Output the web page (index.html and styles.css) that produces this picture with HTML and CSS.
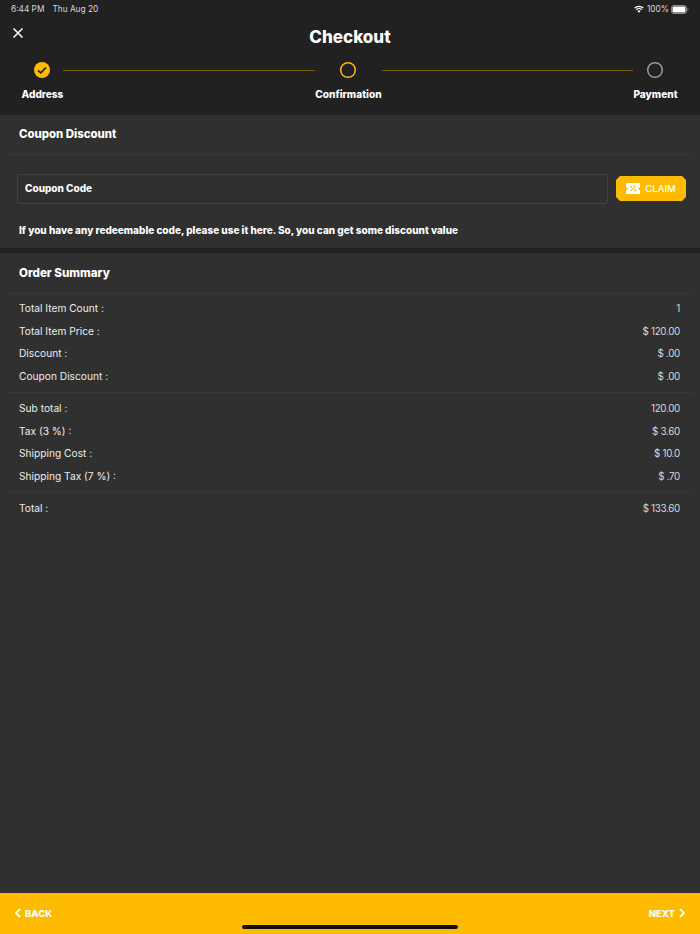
FILE: index.html
```html
<!DOCTYPE html>
<html lang="en">
<head>
<meta charset="utf-8">
<title>Checkout</title>
<link rel="stylesheet" href="styles.css">
</head>
<body>
<div class="page">
  <header class="header">
    <div class="status">
      <span class="status-time"><span class="clock">6:44 PM</span><span>Thu Aug 20</span></span>
      <span class="status-right">
        <svg class="wifi" width="10" height="8" viewBox="0 0 11 9"><path d="M5.500 8.600 3.700 6.700a2.600 2.600 0 0 1 3.600 0ZM2.800 5.800 1.900 4.900a5.200 5.200 0 0 1 7.200 0l-.9.900a3.900 3.900 0 0 0-5.400 0ZM1 4 0 3a7.900 7.900 0 0 1 11 0l-1 1a6.500 6.500 0 0 0-9 0Z" fill="#fff"/></svg>
        <span>100%</span>
        <svg class="battery" width="18" height="9" viewBox="0 0 18 9"><rect x=".5" y=".5" width="15" height="8" rx="2" fill="none" stroke="#8a8a8a"/><rect x="1.500" y="1.500" width="13" height="6" rx="1" fill="#fff"/><path d="M16.500 3v3c.6-.2 1-.8 1-1.500s-.4-1.300-1-1.500Z" fill="#8a8a8a"/></svg>
      </span>
    </div>
    <div class="titlebar">
      <svg class="close" width="10" height="10" viewBox="0 0 10 10"><path d="M.5.500l9 9M9.500.500l-9 9" stroke="#fff" stroke-width="1.500" fill="none"/></svg>
      <h1 class="title">Checkout</h1>
    </div>
    <div class="stepper">
      <div class="step">
        <svg class="step-icon" width="18" height="18" viewBox="0 0 18 18"><circle cx="9" cy="9" r="8" fill="#ffbb00"/><path d="M5 9.300l2.800 2.500 5.200-5.300" fill="none" stroke="#212121" stroke-width="1.600"/></svg>
        <span class="step-label">Address</span>
      </div>
      <div class="line"></div>
      <div class="step">
        <svg class="step-icon" width="18" height="18" viewBox="0 0 18 18"><circle cx="9" cy="9" r="7.300" fill="none" stroke="#ffbb00" stroke-width="1.500"/></svg>
        <span class="step-label">Confirmation</span>
      </div>
      <div class="line"></div>
      <div class="step">
        <svg class="step-icon" width="18" height="18" viewBox="0 0 18 18"><circle cx="9" cy="9" r="7.300" fill="none" stroke="#9a9a9a" stroke-width="1.500"/></svg>
        <span class="step-label">Payment</span>
      </div>
    </div>
  </header>

  <section class="coupon">
    <h2 class="section-title">Coupon Discount</h2>
    <div class="coupon-row">
      <div class="coupon-input">Coupon Code</div>
      <div class="claim">
        <svg width="14" height="11" viewBox="0 0 14 11"><path fill-rule="evenodd" fill="#fff" d="M.8 0h12.400q.8 0 .8.800V4a1.500 1.500 0 0 0 0 3v3.200q0 .8-.8.800H.8q-.8 0-.8-.8V7a1.500 1.500 0 0 0 0-3V.8Q0 0 .8 0ZM9 2.500 4.200 8l.8.600L9.800 3.100ZM5 2.700a1 1 0 1 0 0 2 1 1 0 0 0 0-2ZM9 6.300a1 1 0 1 0 0 2 1 1 0 0 0 0-2Z"/></svg>
        <span>CLAIM</span>
      </div>
    </div>
    <p class="coupon-note">If you have any redeemable code, please use it here. So, you can get some discount value</p>
  </section>

  <section class="summary">
    <h2 class="section-title">Order Summary</h2>
    <div class="group">
      <div class="row"><span class="key">Total Item Count :</span><span class="val">1</span></div>
      <div class="row"><span class="key">Total Item Price :</span><span class="val">$ 120.00</span></div>
      <div class="row"><span class="key">Discount :</span><span class="val">$ .00</span></div>
      <div class="row"><span class="key">Coupon Discount :</span><span class="val">$ .00</span></div>
    </div>
    <div class="group">
      <div class="row"><span class="key">Sub total :</span><span class="val">120.00</span></div>
      <div class="row"><span class="key">Tax (3 %) :</span><span class="val">$ 3.60</span></div>
      <div class="row"><span class="key">Shipping Cost :</span><span class="val">$ 10.0</span></div>
      <div class="row"><span class="key">Shipping Tax (7 %) :</span><span class="val">$ .70</span></div>
    </div>
    <div class="group">
      <div class="row"><span class="key">Total :</span><span class="val">$ 133.60</span></div>
    </div>
  </section>

  <footer class="footer">
    <div class="nav">
      <svg width="6" height="10" viewBox="0 0 6 10"><path d="M5 1 1 5l4 4" fill="none" stroke="#fff" stroke-width="1.800"/></svg>
      <span>BACK</span>
    </div>
    <div class="nav">
      <span>NEXT</span>
      <svg width="6" height="10" viewBox="0 0 6 10"><path d="M1 1l4 4-4 4" fill="none" stroke="#fff" stroke-width="1.800"/></svg>
    </div>
    <div class="home-bar"></div>
  </footer>
</div>
</body>
</html>
```

FILE: styles.css
```css
* { box-sizing: border-box; }
html, body { margin: 0; padding: 0; }
body { background: #212121; font-family: Inter, "Liberation Sans", sans-serif; color: #fff; }
.page { width: 700px; height: 934px; display: flex; flex-direction: column; overflow: hidden; }

.header { height: 115px; background: #212121; flex: none; display: flex; flex-direction: column; }
.status { height: 17px; padding: 1px 11px 0 11px; display: flex; justify-content: space-between; align-items: center; font-size: 8.300px; color: #d8d8d8; }
.status-time { display: flex; gap: 8px; }
.status-right { display: flex; align-items: center; gap: 3px; }
.battery { margin-left: -1px; }
.titlebar { height: 36px; display: flex; align-items: center; justify-content: center; position: relative; }
.close { position: absolute; left: 13px; top: 11px; }
.title { margin: 0; font-size: 17px; font-weight: 800; position: relative; top: 2px; }

.stepper { display: flex; align-items: flex-start; padding: 0 22.500px 0 21.500px; margin-top: 8px; }
.step { display: flex; flex-direction: column; align-items: center; gap: 9px; flex: none; }
.step-icon { display: block; }
.step-label { font-size: 10.100px; font-weight: 800; line-height: 13px; }
.line { flex: 1; height: 1px; background: #7a5c0c; margin: 8.500px 0 0; }

.coupon { height: 133px; background: #303030; flex: none; display: flex; flex-direction: column; }
.section-title { margin: 0 8px; padding: 0 11px; height: 40px; line-height: 39px; font-size: 11.400px; font-weight: 800; border-bottom: 1px solid #393939; flex: none; }
.coupon-row { display: flex; align-items: flex-start; justify-content: space-between; padding: 0 14px 0 17px; margin-top: 19px; }
.coupon-input { width: 591px; height: 30px; border: 1px solid #424242; border-radius: 3px; padding-left: 7px; line-height: 27px; font-size: 10px; font-weight: 800; }
.claim { width: 70px; height: 25px; margin-top: 2px; background: #ffbb00; display: flex; align-items: center; justify-content: center; gap: 5px; font-size: 9.500px; font-weight: 500; clip-path: polygon(4px 0, calc(100% - 4px) 0, 100% 4px, 100% calc(100% - 4px), calc(100% - 4px) 100%, 4px 100%, 0 calc(100% - 4px), 0 4px); }
.coupon-note { margin: 20px 0 0 19px; font-size: 10px; font-weight: 800; line-height: 13px; }

.summary { margin-top: 5px; flex: 1; background: #303030; min-height: 0; }
.group { margin: 0 8px; padding: 4px 11px; border-top: 1px solid #393939; }
.group + .group { padding-top: 5px; }
.summary .section-title { border-bottom: 0; padding-top: 1px; line-height: 38px; font-size: 11.600px; }
.row { display: flex; justify-content: space-between; height: 22.500px; font-size: 10.200px; color: #ececec; padding-right: 1px; }
.key { line-height: 21px; }
.val { color: #d8d8d8; font-size: 9.800px; letter-spacing: -.3px; line-height: 22.500px; }

.footer { height: 41px; flex: none; background: #ffbb00; display: flex; justify-content: space-between; align-items: center; padding: 0 15px 1px; position: relative; }
.nav { display: flex; align-items: center; gap: 4px; font-size: 9.500px; font-weight: 800; }
.home-bar { position: absolute; left: 242px; top: 32px; width: 216px; height: 4px; border-radius: 2px; background: #111; }
```
